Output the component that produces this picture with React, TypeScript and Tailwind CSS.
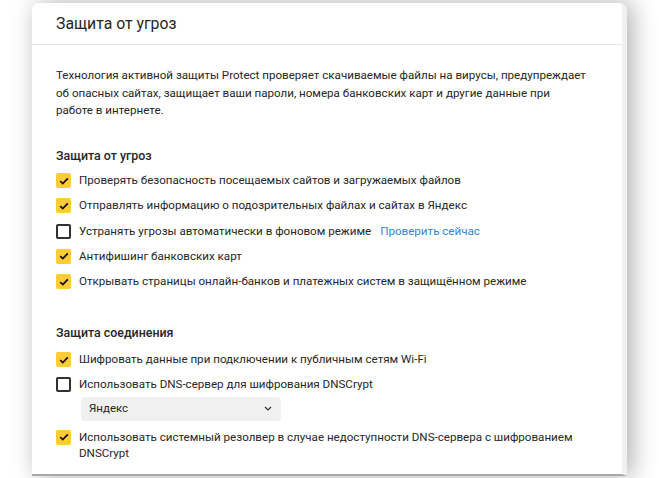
import React from "react";

interface OptionRow {
  label: React.ReactNode;
  checked: boolean;
  link?: string;
}

const threatRows: OptionRow[] = [
  { label: "Проверять безопасность посещаемых сайтов и загружаемых файлов", checked: true },
  { label: "Отправлять информацию о подозрительных файлах и сайтах в Яндекс", checked: true },
  { label: "Устранять угрозы автоматически в фоновом режиме", checked: false, link: "Проверить сейчас" },
  { label: "Антифишинг банковских карт", checked: true },
  { label: "Открывать страницы онлайн-банков и платежных систем в защищённом режиме", checked: true },
];

function Checkbox({ checked }: { checked: boolean }) {
  if (!checked) {
    return <span className="mt-[1px] block h-[15px] w-[15px] shrink-0 rounded-[2px] border-2 border-[#333]" />;
  }
  return (
    <span className="mt-[1px] flex h-[15px] w-[15px] shrink-0 items-center justify-center rounded-[2px] bg-[#ffcc33]">
      <svg width="10" height="8" viewBox="0 0 10 8" fill="none">
        <path d="M1.2 4.1 3.8 6.6 8.8 1.4" stroke="#111" strokeWidth="1.8" />
      </svg>
    </span>
  );
}

function Row({ row }: { row: OptionRow }) {
  return (
    <div className="flex items-start gap-[8px]">
      <Checkbox checked={row.checked} />
      <span>
        {row.label}
        {row.link ? <span className="ml-[9px] text-[#2f86dc]">{row.link}</span> : null}
      </span>
    </div>
  );
}

export default function App() {
  return (
    <div
      className="h-[478px] w-[659px] overflow-hidden bg-white pl-[32px] pt-[3px] text-[#262626]"
      style={{ fontFamily: 'Roboto, "Noto Sans", sans-serif' }}
    >
      <div className="relative h-[473px] w-[595px] rounded-t-[7px] border-r-[5px] border-b-2 border-r-[#f0f0f0] border-b-[#a8a8a8] bg-white shadow-[5px_0_24px_rgba(0,0,0,0.32)]">
        <div className="flex h-[42px] items-center border-b border-[#e6e6e6] px-[24px] pt-[1px] text-[15.8px]">
          Защита от угроз
        </div>

        <div className="px-[24px] pt-[22px] text-[11.6px] leading-[17.5px]">
          <p>
            Технология активной защиты Protect проверяет скачиваемые файлы на вирусы, предупреждает
            <br />
            об опасных сайтах, защищает ваши пароли, номера банковских карт и другие данные при
            <br />
            работе в интернете.
          </p>

          <h2 className="mt-[27px] text-[12.4px] font-medium">Защита от угроз</h2>
          <div className="mt-[8px] flex flex-col gap-[7.75px]">
            {threatRows.map((row, i) => (
              <Row key={i} row={row} />
            ))}
          </div>

          <h2 className="mt-[33px] text-[12.4px] font-medium">Защита соединения</h2>
          <div className="mt-[10px] flex flex-col gap-[7.5px]">
            <Row row={{ label: "Шифровать данные при подключении к публичным сетям Wi-Fi", checked: true }} />
            <Row row={{ label: "Использовать DNS-сервер для шифрования DNSCrypt", checked: false }} />
          </div>
          <div className="ml-[25px] mt-[3px] flex h-[24px] w-[200px] items-center justify-between rounded-[4px] bg-[#f0f0f0] pl-[8px] pr-[9px] text-[11.5px]">
            <span>Яндекс</span>
            <svg width="8" height="5" viewBox="0 0 8 5" fill="none">
              <path d="M1 1 4 4 7 1" stroke="#333" strokeWidth="1.2" />
            </svg>
          </div>
          <div className="mt-[8px] leading-[16.5px]">
            <Row
              row={{
                label: (
                  <>
                    Использовать системный резолвер в случае недоступности DNS-сервера с шифрованием
                    <br />
                    DNSCrypt
                  </>
                ),
                checked: true,
              }}
            />
          </div>
        </div>
      </div>
    </div>
  );
}
